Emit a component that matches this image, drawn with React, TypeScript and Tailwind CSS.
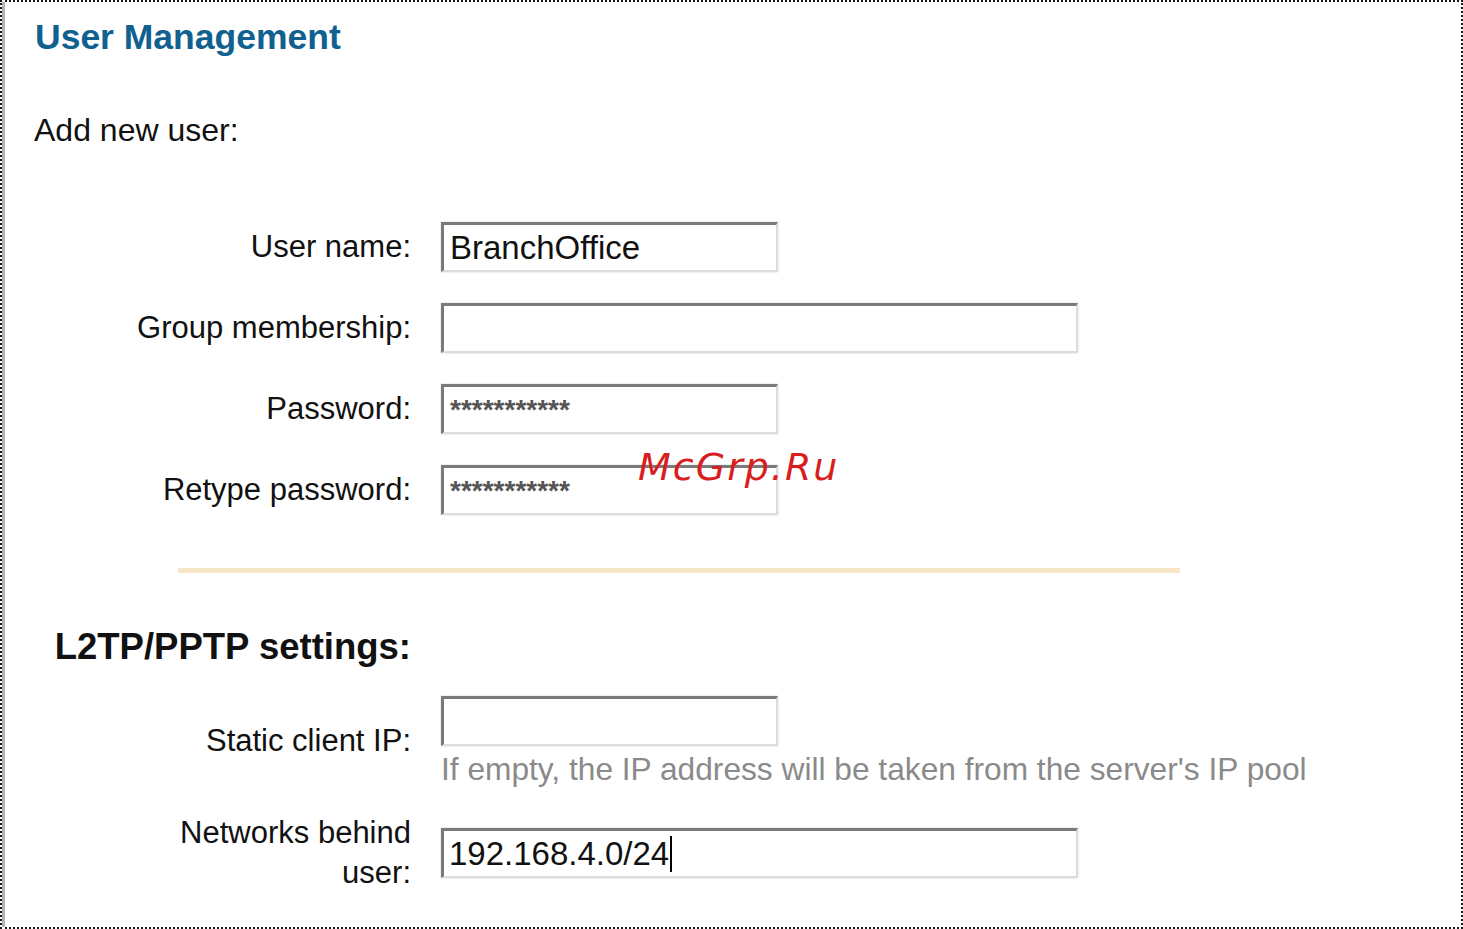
import React from 'react';

// Legacy router admin page: "Add new user" form with sunken Win-style inputs
const inputCls =
  'bg-white h-[50px] border-t-[3px] border-l-[3px] border-b-2 border-r-2 border-t-[#7a7a7a] border-l-[#7a7a7a] border-b-[#dcdcdc] border-r-[#dcdcdc] shadow-[0_0_2px_#d4d4d4] flex items-center';

function Field({ wide, children }: { wide?: boolean; children?: React.ReactNode }) {
  return <div className={`${inputCls} ${wide ? 'w-[637px]' : 'w-[337px]'}`}>{children}</div>;
}

function Row({ label, children, className = '' }: { label: React.ReactNode; children: React.ReactNode; className?: string }) {
  return (
    <div className={`flex items-center ${className}`}>
      <div className="w-[377px] text-right text-[31px] leading-[40px] text-[#111]">{label}</div>
      <div className="ml-[30px]">{children}</div>
    </div>
  );
}

function Stars() {
  return (
    <div className="self-start pt-[9px] pl-[6px] text-[28px] leading-[28px] font-bold text-[#555]">
      ***********
    </div>
  );
}

export default function App() {
  return (
    <div
      className="relative w-[1463px] h-[929px] bg-white border-2 border-dotted border-[#1a1a1a]"
      style={{ fontFamily: '"Liberation Sans", Arial, sans-serif' }}
    >
      <div className="h-full border-l-[3px] border-[#b4b4b4] pl-[29px] pt-[15px]">
        <h1 className="ml-[1px] text-[35.5px] leading-[40px] font-bold text-[#106090]">User Management</h1>
        <p className="mt-[53px] text-[32px] leading-[40px] text-[#111]">Add new user:</p>

        <div className="mt-[72px] flex flex-col gap-[31px]">
          <Row label="User name:">
            <Field>
              <span className="pl-[6px] text-[33px] leading-[40px] text-[#111]">BranchOffice</span>
            </Field>
          </Row>
          <Row label="Group membership:">
            <Field wide />
          </Row>
          <Row label="Password:">
            <Field>
              <Stars />
            </Field>
          </Row>
          <Row label="Retype password:">
            <Field>
              <Stars />
            </Field>
          </Row>
        </div>

        <div className="mt-[53px] ml-[144px] w-[1002px] h-[5px] bg-[#f6e6c6]" />

        <div className="mt-[54px] w-[377px] text-right text-[36.5px] leading-[40px] font-bold text-[#111]">
          L2TP/PPTP settings:
        </div>

        <Row label="Static client IP:" className="mt-[29px]">
          <div>
            <Field />
            <div className="mt-[6px] text-[31.7px] leading-[34px] text-[#8a8a8a] whitespace-nowrap">
              If empty, the IP address will be taken from the server's IP pool
            </div>
          </div>
        </Row>

        <Row
          label={
            <>
              Networks behind
              <br />
              user:
            </>
          }
          className="mt-[27px]"
        >
          <Field wide>
            <span className="pl-[5px] text-[33px] leading-[40px] text-[#111]">192.168.4.0/24</span>
            <span className="inline-block ml-[1px] w-[2px] h-[36px] bg-black" />
          </Field>
        </Row>
      </div>

      <div
        className="absolute left-[636px] top-[446px] text-[38px] leading-[38px] italic tracking-[2px] text-[#d71f1f]"
        style={{ fontFamily: '"DejaVu Sans", sans-serif' }}
      >
        McGrp.Ru
      </div>
    </div>
  );
}
